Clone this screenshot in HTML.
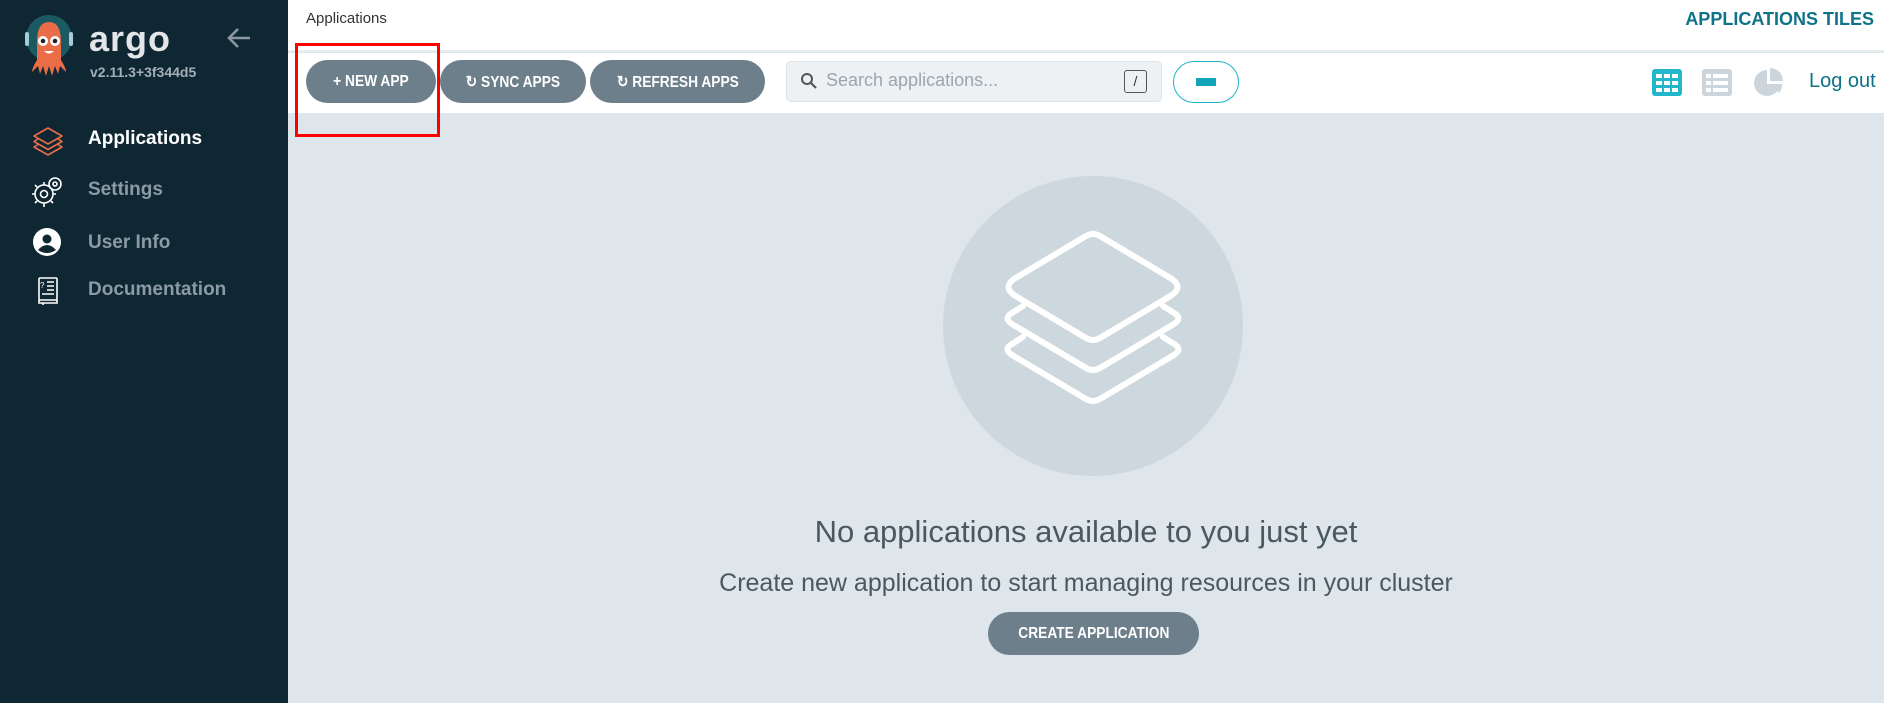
<!DOCTYPE html>
<html><head><meta charset="utf-8"><style>
*{margin:0;padding:0;box-sizing:border-box}
body{width:1884px;height:703px;overflow:hidden;font-family:"Liberation Sans",sans-serif;background:#dee6eb;position:relative}
.sb{position:absolute;left:0;top:0;width:288px;height:703px;background:#0f2733}
.abs{position:absolute;white-space:nowrap}
.nav{position:absolute;left:88px;font-size:19px;font-weight:bold;color:#8a9ba5}
.hdr{position:absolute;left:288px;top:0;right:0;height:52px;background:#fff;border-bottom:2px solid #e8edf0}
.tb{position:absolute;left:288px;top:53px;right:0;height:60px;background:#fff}
.btn{position:absolute;top:60px;height:43px;border-radius:22px;background:#6d7f8b;color:#fff;font-weight:bold;font-size:16px;display:flex;align-items:center;justify-content:center}
.c{display:inline-block;transform:scaleX(.86)}
</style></head><body>
<div class="sb">
<svg class="abs" style="left:22px;top:14px" width="56" height="70" viewBox="0 0 56 70">
<circle cx="27" cy="24" r="23" fill="#1b5a62"/>
<rect x="3" y="18" width="4" height="14" rx="2" fill="#a9cbd6"/><rect x="47" y="18" width="4" height="14" rx="2" fill="#a9cbd6"/>
<path d="M15 28 Q15 8 27 8 Q39 8 39 28 L39 46 Q44 54 44 58 L38 52 L36 60 L33 52 L30 62 L27 52 L24 62 L21 52 L18 60 L16 52 L10 58 Q10 54 15 46Z" fill="#ea6d48"/>
<circle cx="21" cy="27" r="5" fill="#fff"/><circle cx="33" cy="27" r="5" fill="#fff"/>
<circle cx="21" cy="27" r="2.3" fill="#222"/><circle cx="33" cy="27" r="2.3" fill="#222"/>
<path d="M22 37 Q27 42 32 37Z" fill="#fff"/>
</svg>
<div class="abs" style="left:89px;top:18px;font-size:36px;color:#e2e6e8;font-weight:bold;letter-spacing:1px">argo</div>
<div class="abs" style="left:90px;top:64px;font-size:14px;color:#a4b0b7;font-weight:bold">v2.11.3+3f344d5</div>
<svg class="abs" style="left:226px;top:27px" width="26" height="22" viewBox="0 0 26 22"><path d="M24 11H3M12 2L3 11L12 20" stroke="#8b98a1" stroke-width="2.6" fill="none"/></svg>
<svg class="abs" style="left:32px;top:126px" width="32" height="30" viewBox="0 0 32 30"><g stroke="#e96d48" stroke-width="1.6" fill="none" stroke-linejoin="round"><path d="M16 2L30 10L16 18L2 10Z"/><path d="M6 13L2 15.5L16 23.5L30 15.5L26 13"/><path d="M6 18.5L2 21L16 29L30 21L26 18.5"/></g></svg>
<div class="nav" style="top:128px;color:#fff">Applications</div>
<svg class="abs" style="left:30px;top:175px" width="34" height="34" viewBox="0 0 34 34"><g stroke="#fff" stroke-width="1.6" fill="none"><circle cx="14" cy="19" r="9"/><circle cx="14" cy="19" r="3.5"/><circle cx="25" cy="9" r="6"/><circle cx="25" cy="9" r="2"/><path d="M14 7v3M14 28v4M2 19h3M23 19h3M5 10l2 2M21 26l2 2M5 28l2-2"/></g></svg>
<div class="nav" style="top:179px">Settings</div>
<svg class="abs" style="left:33px;top:228px" width="28" height="28" viewBox="0 0 28 28"><circle cx="14" cy="14" r="14" fill="#fff"/><circle cx="14" cy="11" r="4.5" fill="#0f2733"/><path d="M5 22Q14 12 23 22Q14 28 5 22Z" fill="#0f2733"/></svg>
<div class="nav" style="top:232px">User Info</div>
<svg class="abs" style="left:37px;top:277px" width="22" height="28" viewBox="0 0 22 28"><g stroke="#fff" stroke-width="1.6" fill="none"><rect x="2" y="1" width="18" height="22" rx="1"/><path d="M2 23v3h18v-3M6 26v2M10 5h7M10 9h7M10 13h7M5 17h12"/></g><text x="3" y="11" font-size="8" fill="#fff" font-family="Liberation Sans">?</text></svg>
<div class="nav" style="top:279px">Documentation</div>
</div>
<div class="hdr"></div>
<div class="abs" style="left:306px;top:10px;font-size:15px;color:#333">Applications</div>
<div class="abs" style="right:10px;top:9px;font-size:18px;font-weight:bold;color:#0e7289">APPLICATIONS TILES</div>
<div class="tb"></div>
<div class="btn" style="left:306px;width:130px"><span class="c">+ NEW APP</span></div>
<div class="btn" style="left:440px;width:146px"><span class="c">&#x21bb; SYNC APPS</span></div>
<div class="btn" style="left:590px;width:175px"><span class="c">&#x21bb; REFRESH APPS</span></div>
<div class="abs" style="left:295px;top:43px;width:145px;height:94px;border:3px solid #f00"></div>
<div class="abs" style="left:786px;top:61px;width:376px;height:41px;background:#eef1f4;border:1px solid #dde3e7;border-radius:5px"></div>
<svg class="abs" style="left:800px;top:72px" width="18" height="18" viewBox="0 0 18 18"><circle cx="7" cy="7" r="5" stroke="#555" stroke-width="2" fill="none"/><path d="M11 11l5 5" stroke="#555" stroke-width="2.2"/></svg>
<div class="abs" style="left:826px;top:70px;font-size:18px;color:#9aa6ae">Search applications...</div>
<div class="abs" style="left:1124px;top:70px;width:23px;height:23px;border:1px solid #555;border-radius:3px;font-size:14px;text-align:center;line-height:21px;color:#333">/</div>
<div class="abs" style="left:1173px;top:61px;width:66px;height:42px;border:1px solid #1bb5c9;border-radius:21px;background:#fff"></div>
<div class="abs" style="left:1196px;top:78px;width:20px;height:8px;background:#13a3b8"></div>
<svg class="abs" style="left:1652px;top:69px" width="30" height="27" viewBox="0 0 30 27"><rect width="30" height="27" rx="3" fill="#23b7cb"/><g fill="#fff"><rect x="4" y="5" width="6" height="4"/><rect x="12" y="5" width="6" height="4"/><rect x="20" y="5" width="6" height="4"/><rect x="4" y="12" width="6" height="4"/><rect x="12" y="12" width="6" height="4"/><rect x="20" y="12" width="6" height="4"/><rect x="4" y="19" width="6" height="4"/><rect x="12" y="19" width="6" height="4"/><rect x="20" y="19" width="6" height="4"/></g></svg>
<svg class="abs" style="left:1702px;top:69px" width="30" height="27" viewBox="0 0 30 27"><rect width="30" height="27" rx="3" fill="#ccd5dc"/><g fill="#fff"><rect x="4" y="5" width="5" height="4"/><rect x="11" y="5" width="15" height="4"/><rect x="4" y="12" width="5" height="4"/><rect x="11" y="12" width="15" height="4"/><rect x="4" y="19" width="5" height="4"/><rect x="11" y="19" width="15" height="4"/></g></svg>
<svg class="abs" style="left:1753px;top:67px" width="32" height="32" viewBox="0 0 32 32"><path d="M14 3A13 13 0 1 0 27 17L14 17Z" fill="#ccd5dc"/><path d="M17 1A13 13 0 0 1 30 14L17 14Z" fill="#ccd5dc"/><path d="M17 17L29 17A13 13 0 0 1 26 26Z" fill="#ccd5dc"/></svg>
<div class="abs" style="left:1809px;top:70px;font-size:20px;color:#0e7289">Log out</div>
<div class="abs" style="left:943px;top:176px;width:300px;height:300px;border-radius:50%;background:#ccd7de"></div>
<svg class="abs" style="left:940px;top:180px" width="300" height="300" viewBox="0 0 300 300"><g stroke="#fff" stroke-width="6" fill="none" stroke-linejoin="round" stroke-linecap="round"><path d="M146 56Q153 52 160 56L232 99Q243 107 232 115L160 158Q153 162 146 158L74 115Q63 107 74 99Z" /><path d="M83 126L72 133Q63 138 72 144L146 188Q153 192 160 188L234 144Q243 138 234 133L223 126"/><path d="M83 157L72 164Q63 169 72 175L146 219Q153 223 160 219L234 175Q243 169 234 164L223 157"/></g></svg>
<div class="abs" style="left:0;right:0;padding-left:288px;top:514px;text-align:center;font-size:31px;color:#4a5860">No applications available to you just yet</div>
<div class="abs" style="left:0;right:0;padding-left:288px;top:569px;text-align:center;font-size:25px;color:#4a5860">Create new application to start managing resources in your cluster</div>
<div class="btn" style="left:988px;top:612px;width:211px;height:43px;font-size:16px"><span class="c">CREATE APPLICATION</span></div>
</body></html>
